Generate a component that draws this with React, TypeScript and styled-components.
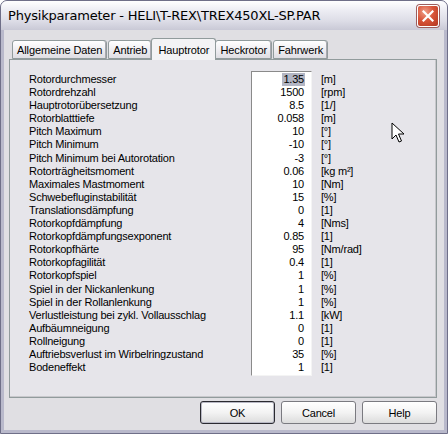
import styled, { createGlobalStyle } from "styled-components";

const GlobalStyle = createGlobalStyle`
  html, body {
    margin: 0;
    padding: 0;
    background: #ffffff;
  }
  * {
    box-sizing: border-box;
  }
`;

const Window = styled.div`
  position: relative;
  width: 448px;
  height: 434px;
  display: flex;
  flex-direction: column;
  background: #b9b9cb;
  border: 1px solid #6f6f88;
  border-radius: 7px 7px 0 0;
  overflow: hidden;
  font-family: "Liberation Sans", Arial, sans-serif;
`;

const TitleBar = styled.div`
  height: 29px;
  flex-shrink: 0;
  display: flex;
  align-items: center;
  justify-content: space-between;
  padding: 0 8px 0 7px;
  background: linear-gradient(#ffffff 0%, #eeeef4 30%, #dcdce6 70%, #c9c9d6 100%);
`;

const Title = styled.div`
  font-family: "DejaVu Sans", sans-serif;
  font-size: 13px;
  color: #000000;
  letter-spacing: -0.2px;
`;

const CloseButton = styled.div`
  width: 22px;
  height: 22px;
  border-radius: 3px;
  border: 1px solid #ffffff;
  background: radial-gradient(circle at 35% 30%, #f0a08a 0%, #d8553a 45%, #b33620 100%);
  box-shadow: 0 0 0 1px #9c5d5d;
  display: flex;
  align-items: center;
  justify-content: center;
`;

const Client = styled.div`
  flex: 1;
  margin: 0 3px 3px 3px;
  background: #e0dfe3;
  display: flex;
  flex-direction: column;
  padding: 7px 7px 0 5px;
  letter-spacing: -0.2px;
`;

const TabStrip = styled.div`
  display: flex;
  align-items: flex-end;
  height: 22px;
  padding-left: 3px;
  position: relative;
  z-index: 1;
`;

const Tab = styled.div<{ $active?: boolean }>`
  height: ${(p) => (p.$active ? "22px" : "19px")};
  margin-bottom: ${(p) => (p.$active ? "-1px" : "0")};
  margin-left: ${(p) => (p.$active ? "-2px" : "0")};
  margin-right: ${(p) => (p.$active ? "-1px" : "1px")};
  padding: 0 ${(p) => (p.$active ? "6px" : "4px")};
  display: flex;
  align-items: center;
  font-size: 11px;
  letter-spacing: -0.1px;
  color: #000000;
  border: 1px solid #919b9c;
  border-bottom: ${(p) => (p.$active ? "none" : "1px solid #919b9c")};
  border-radius: 3px 3px 0 0;
  background: ${(p) =>
    p.$active ? "#f3f3f5" : "linear-gradient(#ffffff, #ecebef 60%, #dfdee3)"};
  box-shadow: ${(p) => (p.$active ? "none" : "inset -1px 0 0 #a9a9b0")};
  position: relative;
  z-index: ${(p) => (p.$active ? 2 : 1)};
`;

const Panel = styled.div`
  height: 339px;
  border: 1px solid #919b9c;
  background: #e6e5ea;
  display: flex;
  padding: 11px 0 0 19px;
  box-shadow: inset -1px -1px 0 #c8c8cc;
`;

const LabelCol = styled.div`
  width: 222px;
  padding-top: 2px;
  display: flex;
  flex-direction: column;
`;

const Label = styled.div`
  font-size: 11px;
  line-height: 13.1px;
  height: 13.1px;
  color: #000000;
  white-space: nowrap;
`;

const ValueBox = styled.div`
  width: 61px;
  height: 305px;
  background: #ffffff;
  border-top: 1px solid #8a8a8a;
  border-left: 1px solid #8a8a8a;
  border-right: 1px solid #f4f4f4;
  border-bottom: 1px solid #f4f4f4;
  padding: 1px 6px 0 0;
  display: flex;
  flex-direction: column;
  align-items: flex-end;
`;

const Value = styled.div<{ $selected?: boolean }>`
  font-size: 11px;
  line-height: 13.1px;
  height: 13.1px;
  color: #000000;
  padding: 0 1px;
  background: ${(p) => (p.$selected ? "#b3b6c4" : "transparent")};
`;

const UnitCol = styled.div`
  padding: 2px 0 0 9px;
  display: flex;
  flex-direction: column;
`;

const Unit = styled.div`
  font-size: 11px;
  line-height: 13.1px;
  height: 13.1px;
  color: #000000;
  white-space: nowrap;
`;

const ButtonRow = styled.div`
  display: flex;
  justify-content: flex-end;
  gap: 6px;
  padding-top: 3px;
`;

const Button = styled.div<{ $default?: boolean }>`
  width: 75px;
  height: 23px;
  display: flex;
  align-items: center;
  justify-content: center;
  font-size: 11px;
  color: #000000;
  border: 1px solid ${(p) => (p.$default ? "#2a2a30" : "#7a7a80")};
  border-radius: 3px;
  background: linear-gradient(#ffffff 0%, #f3f3f3 50%, #dcdcdc 100%);
  box-shadow: ${(p) => (p.$default ? "inset 0 0 0 1px #b8b8c4" : "none")};
`;

const Cursor = styled.svg`
  position: absolute;
  left: 390px;
  top: 121px;
`;

const rows: [string, string, string][] = [
  ["Rotordurchmesser", "1.35", "[m]"],
  ["Rotordrehzahl", "1500", "[rpm]"],
  ["Hauptrotorübersetzung", "8.5", "[1/]"],
  ["Rotorblatttiefe", "0.058", "[m]"],
  ["Pitch Maximum", "10", "[°]"],
  ["Pitch Minimum", "-10", "[°]"],
  ["Pitch Minimum bei Autorotation", "-3", "[°]"],
  ["Rotorträgheitsmoment", "0.06", "[kg m²]"],
  ["Maximales Mastmoment", "10", "[Nm]"],
  ["Schwebefluginstabilität", "15", "[%]"],
  ["Translationsdämpfung", "0", "[1]"],
  ["Rotorkopfdämpfung", "4", "[Nms]"],
  ["Rotorkopfdämpfungsexponent", "0.85", "[1]"],
  ["Rotorkopfhärte", "95", "[Nm/rad]"],
  ["Rotorkopfagilität", "0.4", "[1]"],
  ["Rotorkopfspiel", "1", "[%]"],
  ["Spiel in der Nickanlenkung", "1", "[%]"],
  ["Spiel in der Rollanlenkung", "1", "[%]"],
  ["Verlustleistung bei zykl. Vollausschlag", "1.1", "[kW]"],
  ["Aufbäumneigung", "0", "[1]"],
  ["Rollneigung", "0", "[1]"],
  ["Auftriebsverlust im Wirbelringzustand", "35", "[%]"],
  ["Bodeneffekt", "1", "[1]"],
];

const tabs = ["Allgemeine Daten", "Antrieb", "Hauptrotor", "Heckrotor", "Fahrwerk"];

export default function App() {
  return (
    <>
      <GlobalStyle />
      <Window>
        <TitleBar>
          <Title>Physikparameter - HELI\T-REX\TREX450XL-SP.PAR</Title>
          <CloseButton>
            <svg width="12" height="12" viewBox="0 0 12 12">
              <path d="M1.5 1.5 L10.5 10.5 M10.5 1.5 L1.5 10.5" stroke="#ffffff" strokeWidth="2.2" strokeLinecap="square" />
            </svg>
          </CloseButton>
        </TitleBar>
        <Client>
          <TabStrip>
            {tabs.map((t) => (
              <Tab key={t} $active={t === "Hauptrotor"}>
                {t}
              </Tab>
            ))}
          </TabStrip>
          <Panel>
            <LabelCol>
              {rows.map((r) => (
                <Label key={r[0]}>{r[0]}</Label>
              ))}
            </LabelCol>
            <ValueBox>
              {rows.map((r, i) => (
                <Value key={r[0]} $selected={i === 0}>
                  {r[1]}
                </Value>
              ))}
            </ValueBox>
            <UnitCol>
              {rows.map((r) => (
                <Unit key={r[0]}>{r[2]}</Unit>
              ))}
            </UnitCol>
          </Panel>
          <ButtonRow>
            <Button $default>OK</Button>
            <Button>Cancel</Button>
            <Button>Help</Button>
          </ButtonRow>
        </Client>
        <Cursor width="14" height="22" viewBox="0 0 14 22">
          <path d="M1 1 L1 17 L5 13 L8 20 L10.5 19 L7.5 12 L13 12 Z" fill="#ffffff" stroke="#000000" strokeWidth="1" strokeLinejoin="miter" />
        </Cursor>
      </Window>
    </>
  );
}
